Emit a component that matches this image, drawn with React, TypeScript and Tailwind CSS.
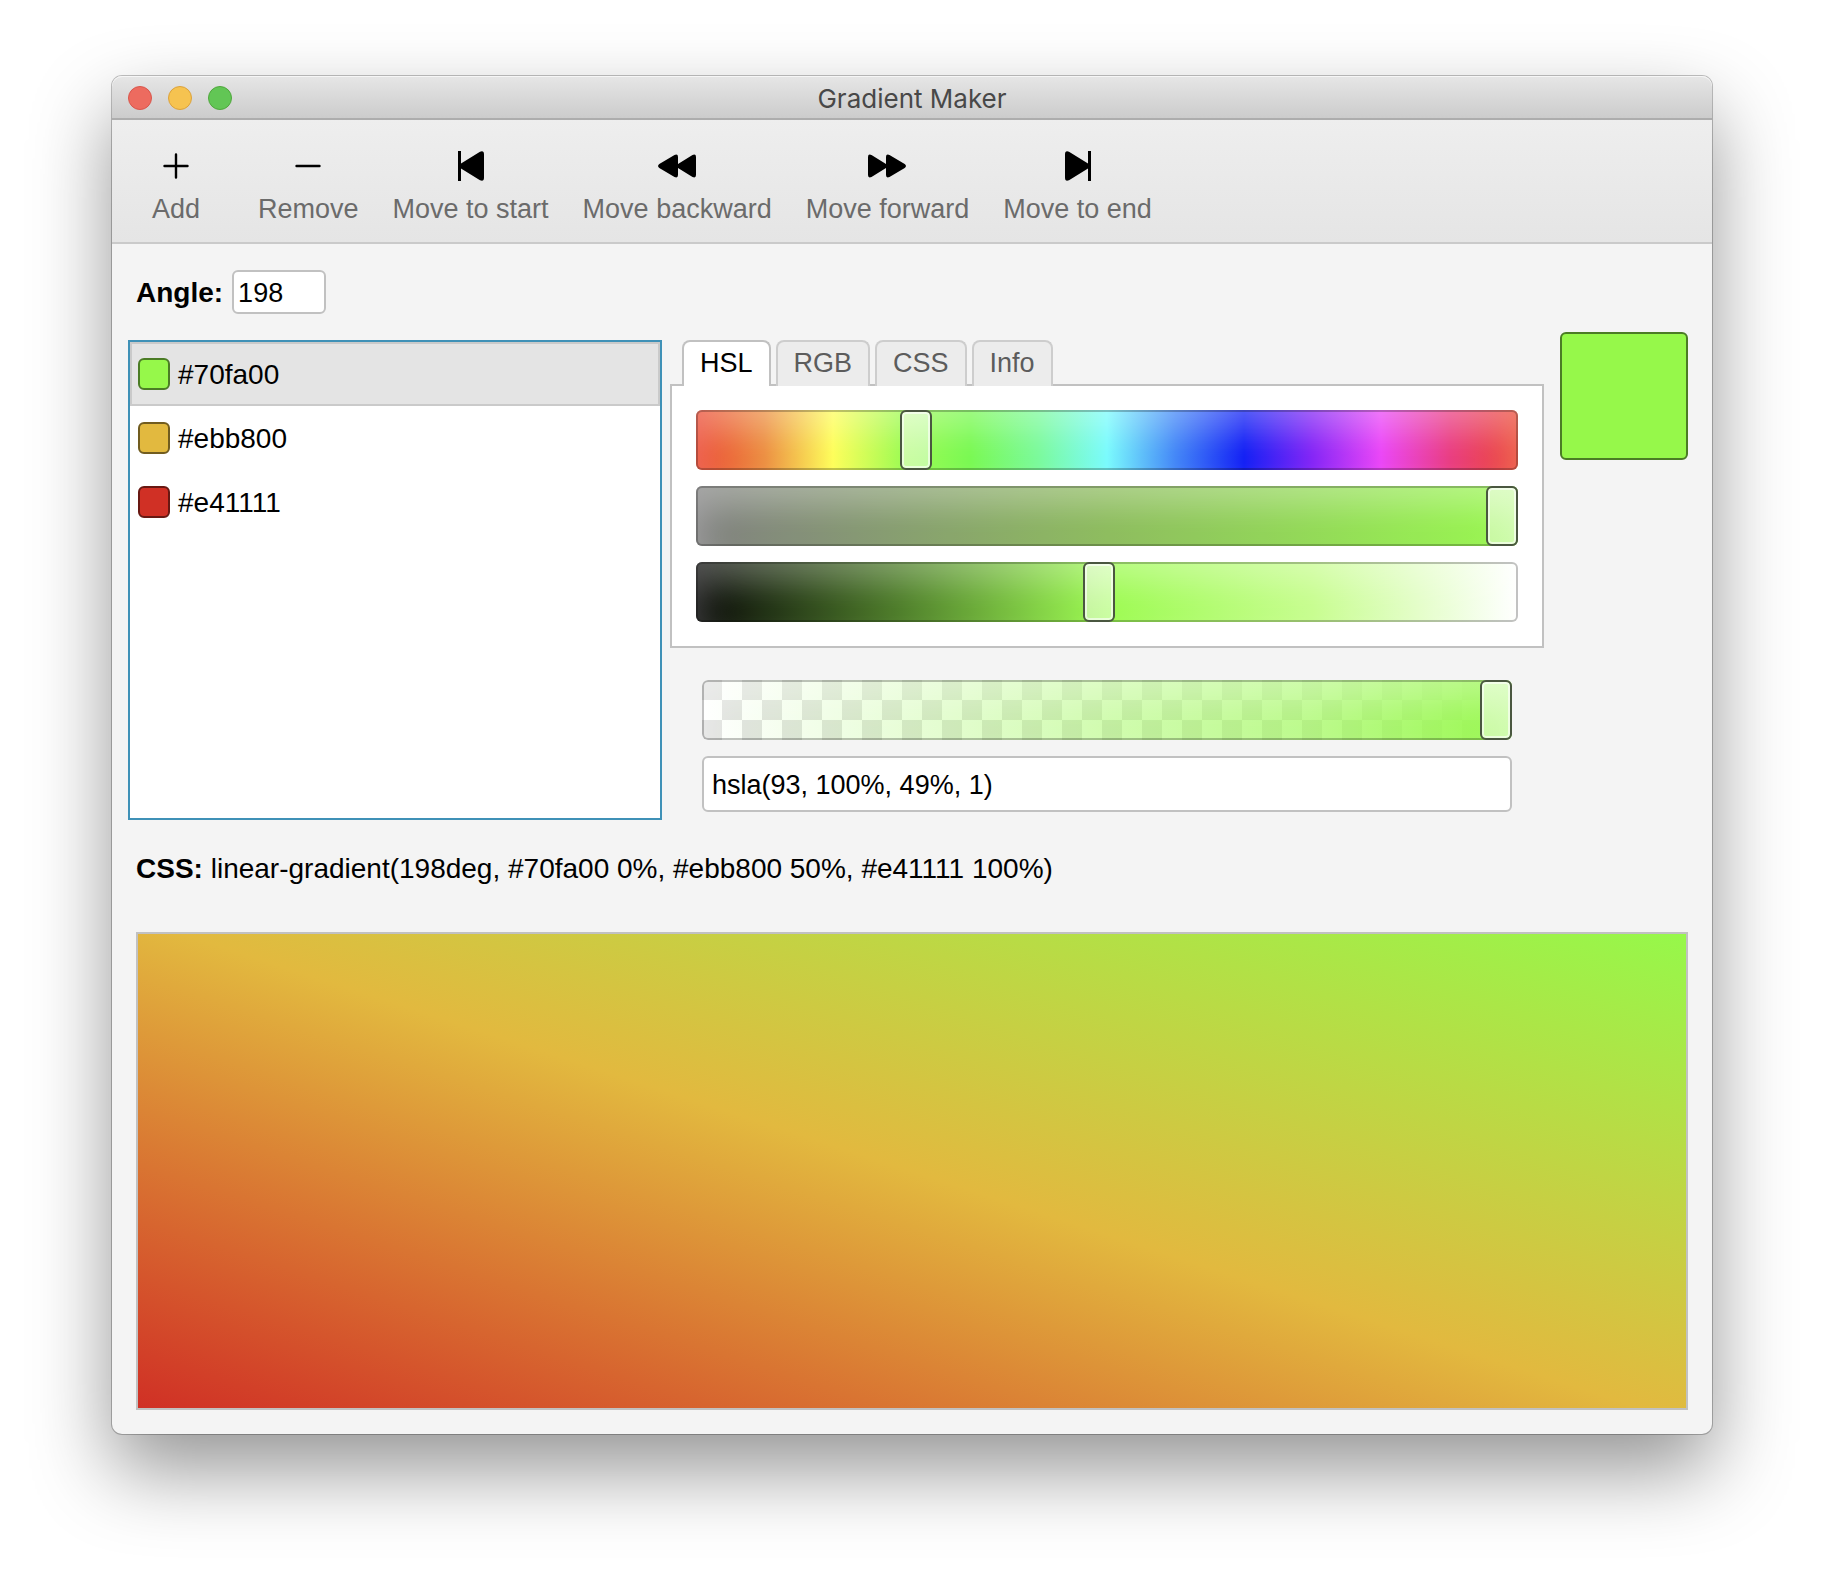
import React, { useState } from "react";

const tools = [
  { label: "Add", icon: <PlusIcon />, width: "w-24" },
  { label: "Remove", icon: <MinusIcon />, width: "" },
  { label: "Move to start", icon: <StartIcon />, width: "" },
  { label: "Move backward", icon: <BackwardIcon />, width: "" },
  { label: "Move forward", icon: <ForwardIcon />, width: "" },
  { label: "Move to end", icon: <EndIcon />, width: "" },
];

const stops = [
  { name: "#70fa00", swatch: "bg-[#96f84a] border-[#4b7c25]" },
  { name: "#ebb800", swatch: "bg-[#e2b93f] border-[#715c1f]" },
  { name: "#e41111", swatch: "bg-[#d03025] border-[#681812]" },
];

const tabs = ["HSL", "RGB", "CSS", "Info"];

const sliderClass =
  "block m-0 h-[60px] w-full appearance-none rounded-md outline-none " +
  "shadow-[inset_0_0_0_2px_rgba(0,0,0,0.24),inset_0_20px_40px_rgba(255,255,255,0.35)] " +
  "[&::-webkit-slider-thumb]:appearance-none [&::-webkit-slider-thumb]:h-[60px] [&::-webkit-slider-thumb]:w-8 " +
  "[&::-webkit-slider-thumb]:rounded-md [&::-webkit-slider-thumb]:border-2 [&::-webkit-slider-thumb]:border-[#4a5740] " +
  "[&::-webkit-slider-thumb]:bg-linear-to-b [&::-webkit-slider-thumb]:from-white/55 [&::-webkit-slider-thumb]:to-white/45 [&::-webkit-slider-thumb]:bg-clip-padding " +
  "[&::-webkit-slider-thumb]:shadow-[inset_0_0_0_2px_rgba(255,255,255,0.6)]";

function PlusIcon() {
  return (
    <svg width="26" height="26" viewBox="0 0 26 26" stroke="black" strokeWidth="2.400" strokeLinecap="round">
      <path d="M13 1.500V24.500M1.500 13H24.500" />
    </svg>
  );
}

function MinusIcon() {
  return (
    <svg width="26" height="26" viewBox="0 0 26 26" stroke="black" strokeWidth="2.400" strokeLinecap="round">
      <path d="M1.500 13H24.500" />
    </svg>
  );
}

function StartIcon() {
  return (
    <svg width="26" height="30" viewBox="0 0 26 30">
      <path d="M0 0H3V12.500L22 0.700Q26 -1 26 3.500V26.500Q26 31 22 29.300L3 17.500V30H0Z" />
    </svg>
  );
}

function EndIcon() {
  return (
    <svg width="26" height="30" viewBox="0 0 26 30">
      <path d="M26 0H23V12.500L4 0.700Q0 -1 0 3.500V26.500Q0 31 4 29.300L23 17.500V30H26Z" />
    </svg>
  );
}

function BackwardIcon() {
  return (
    <svg width="38" height="24" viewBox="0 0 38 24">
      <path d="M1.300 10L16.500 1Q20 -0.500 20 3V10L34.500 1Q38 -0.500 38 3V21Q38 24.500 34.500 23L20 14V21Q20 24.500 16.500 23L1.300 14Q-1.200 12 1.300 10Z" />
    </svg>
  );
}

function ForwardIcon() {
  return (
    <svg width="38" height="24" viewBox="0 0 38 24">
      <path d="M36.700 10L21.500 1Q18 -0.500 18 3V10L3.500 1Q0 -0.500 0 3V21Q0 24.500 3.500 23L18 14V21Q18 24.500 21.500 23L36.700 14Q39.200 12 36.700 10Z" />
    </svg>
  );
}

function TitleBar() {
  return (
    <header className="grid h-11 grid-cols-[1fr_auto_1fr] items-center rounded-t-[10px] border-b-2 border-[#adadad] bg-linear-to-b from-[#e6e6e6] to-[#cccccc] px-4 pt-[2px] shadow-[inset_0_1px_0_#f6f6f6]">
      <div className="flex gap-4">
        <button aria-label="Close" className="size-6 rounded-full border border-[#d9564c] bg-[#ed6b5f]" />
        <button aria-label="Minimize" className="size-6 rounded-full border border-[#dca23c] bg-[#f6c350]" />
        <button aria-label="Zoom" className="size-6 rounded-full border border-[#50a73d] bg-[#62c655]" />
      </div>
      <h1 className="pt-[2px] font-['Inter'] text-[26px] leading-8 text-[#484848]">Gradient Maker</h1>
    </header>
  );
}

function ToolBar() {
  return (
    <nav className="flex gap-[34px] border-b-2 border-[#cacaca] bg-linear-to-b from-[#eeeeee] to-[#e5e5e5] px-4 pt-[30px] pb-[17px]">
      {tools.map((tool) => (
        <button key={tool.label} className={`flex flex-col items-center gap-[11px] ${tool.width}`}>
          <span className="flex h-8 items-center">{tool.icon}</span>
          <span className="text-[27px] leading-8 whitespace-nowrap text-[#6b6b6b]">{tool.label}</span>
        </button>
      ))}
    </nav>
  );
}

function StopList() {
  const [selected, setSelected] = useState(0);
  return (
    <ul role="listbox" aria-label="Color stops" className="mt-2 mr-2 min-w-0 flex-[530] border-2 border-[#3f91b7] bg-white">
      {stops.map((stop, i) => (
        <li
          key={stop.name}
          role="option"
          aria-selected={i === selected}
          onClick={() => setSelected(i)}
          className={`flex h-16 items-center gap-2 border-2 px-[6px] ${i === selected ? "border-[#cacaca] bg-[#e4e4e4]" : "border-transparent"}`}
        >
          <span className={`size-8 rounded-md border-2 ${stop.swatch}`} />
          <span className="pt-[2px] text-[28px] leading-8">{stop.name}</span>
        </li>
      ))}
    </ul>
  );
}

function ColorEditor() {
  const [active, setActive] = useState("HSL");
  return (
    <section className="mt-2 mr-4 min-w-0 flex-[874] pb-2">
      <div role="tablist" className="flex gap-[5px] pl-3">
        {tabs.map((tab) => (
          <button
            key={tab}
            role="tab"
            aria-selected={tab === active}
            onClick={() => setActive(tab)}
            className={`h-[46px] rounded-t-lg border-x-2 border-t-2 px-4 pb-[2px] text-[27px] leading-10 ${
              tab === active ? "relative border-[#c1c1c1] bg-white text-black" : "border-[#cdcdcd] bg-[#ececec] text-[#5c5c5c]"
            }`}
          >
            {tab}
          </button>
        ))}
      </div>
      <div role="tabpanel" className="-mt-[2px] flex flex-col gap-4 border-2 border-[#c1c1c1] bg-white p-6">
        <input
          type="range"
          aria-label="Hue"
          min={0}
          max={360}
          defaultValue={93}
          className={`${sliderClass} bg-[linear-gradient(90deg,#ea3f28,#ec8b3b,#fefe54,#9cfb4c,#75f94c,#76fa98,#75fbfd,#3c82f7,#0a18f5,#801df6,#ea3ff7,#e9367e,#ea3f28)]`}
        />
        <input
          type="range"
          aria-label="Saturation"
          min={0}
          max={100}
          defaultValue={100}
          className={`${sliderClass} bg-[linear-gradient(90deg,#7c7c7c,#89ba58,#96f84a)]`}
        />
        <input
          type="range"
          aria-label="Lightness"
          min={0}
          max={100}
          defaultValue={49}
          className={`${sliderClass} bg-[linear-gradient(90deg,#000000,#497b23,#9afb4c,#c6fd8c,#ffffff)]`}
        />
      </div>
      <div className="mt-8 flex flex-col gap-4 px-8">
        <input
          type="range"
          aria-label="Opacity"
          min={0}
          max={100}
          defaultValue={100}
          className={`${sliderClass} bg-[linear-gradient(90deg,#96f84a00,#96f84a75_50%,#96f84aa8_75%,#96f84a),conic-gradient(#ffffff_25%,#e2e2e2_0_50%,#ffffff_0_75%,#e2e2e2_0)] bg-[size:100%_100%,40px_40px]`}
        />
        <input
          type="text"
          aria-label="Color value"
          defaultValue="hsla(93, 100%, 49%, 1)"
          className="h-14 w-full rounded-md border-2 border-[#c1c1c1] bg-white px-2 pt-[2px] text-[27px] leading-8 outline-none"
        />
      </div>
    </section>
  );
}

export default function App() {
  return (
    <div className="min-h-screen bg-white px-28 pt-19 pb-37 font-['Liberation_Sans',Arial,sans-serif] text-black">
      <main className="rounded-[10px] bg-[#f4f4f4] shadow-[0_0_0_1px_rgba(0,0,0,0.24),0_36px_80px_rgba(0,0,0,0.42)]">
        <TitleBar />
        <ToolBar />
        <div className="flex items-center gap-[9px] px-6 pt-[26px]">
          <label htmlFor="angle" className="pt-[2px] text-[28px] leading-8 font-bold">
            Angle:
          </label>
          <input
            id="angle"
            type="text"
            defaultValue="198"
            className="h-11 w-[94px] rounded-md border-2 border-[#c1c1c1] bg-white px-1 pt-[2px] text-[27px] leading-8 outline-none"
          />
        </div>
        <div className="mt-[18px] flex pr-6 pl-4">
          <StopList />
          <ColorEditor />
          <div className="size-32 shrink-0 rounded-md border-2 border-[#4b7c25] bg-[#96f84a]" />
        </div>
        <div className="px-6 pt-[33px] pb-6">
          <p className="text-[28px] leading-8">
            <b>CSS:</b> linear-gradient(198deg, #70fa00 0%, #ebb800 50%, #e41111 100%)
          </p>
          <div className="mt-[47px] h-[478px] border-2 border-[#c1c1c1] bg-[linear-gradient(198deg,#96f84a_0%,#e2b93f_50%,#d03025_100%)]" />
        </div>
      </main>
    </div>
  );
}
